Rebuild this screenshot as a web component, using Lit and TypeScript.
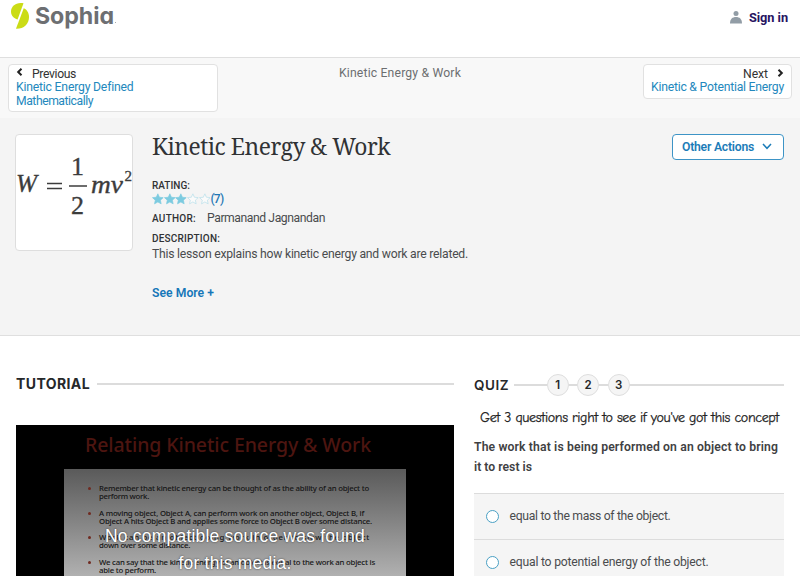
import { LitElement, html, css, svg } from "lit";
import { customElement, property } from "lit/decorators.js";

/** One line of text, tracked so that it fills the given measure. */
@customElement("fitted-text")
class FittedText extends LitElement {
  @property({ type: Number }) width = 0;
  static styles = css`
    :host { display: inline-block; white-space: pre; }
    .line { display: inline-block; }
  `;
  firstUpdated() {
    const line = this.renderRoot.querySelector(".line") as HTMLElement;
    const count = (this.textContent || "").length;
    if (!this.width || !count) return;
    const spacing = (this.width - line.getBoundingClientRect().width) / count;
    line.style.letterSpacing = `${spacing}px`;
  }
  render() {
    return html`<span class="line"><slot></slot></span>`;
  }
}

const fit = (text: string, width: number) =>
  html`<fitted-text .width=${width}>${text}</fitted-text>`;

const STAR = "M6 .7 7.6 4.2 11.5 4.6 8.6 7.2 9.4 11 6 9 2.6 11 3.4 7.2 .5 4.6 4.4 4.2Z";

@customElement("app-root")
class AppRoot extends LitElement {
  static styles = css`
    :host {
      display: block; width: 800px; height: 576px; overflow: hidden; background: #fff;
      font-family: Roboto, "Liberation Sans", sans-serif; font-size: 12.2px; color: #4a4c4e;
    }
    * { box-sizing: border-box; }
    svg { display: block; }
    .header {
      height: 58px; border-bottom: 1px solid #dfdfdf; padding: 2px 12px 0 10px;
      display: flex; justify-content: space-between; align-items: flex-start;
    }
    .brand { display: flex; }
    .name {
      font: 700 23.2px/28px Inter, Lato, sans-serif; font-feature-settings: "cv11";
      color: #6d6f72; margin-left: 5px;
    }
    .dot { width: 1px; height: 1px; background: #aaa; margin: 20px 0 0 1px; }
    .signin { display: flex; align-items: center; margin-top: 7px; height: 17px; gap: 7px; font-size: 12.8px; font-weight: 700; color: #26145f; }
    .nav {
      height: 60px; background: #f8f8f8; padding: 6px 8px 0;
      display: grid; grid-template-columns: 210px 1fr 149px; align-items: start;
    }
    .card { background: #fff; border: 1px solid #e1e1e1; border-radius: 4px; padding: 3px 7px 0; line-height: 13.3px; color: #2388bd; }
    .prev { height: 48px; }
    .next { height: 35px; text-align: right; }
    .dir { display: flex; height: 13.4px; color: #333; }
    .dir svg { margin-top: 0; }
    .prev .dir { gap: 8px; }
    .next .dir { justify-content: flex-end; gap: 8px; }
    .next .dir svg { margin-top: 1px; }
    .here { padding-left: 121px; padding-top: 2px; line-height: 15px; color: #6c6e70; }
    .detail {
      height: 218px; background: #f4f4f4; border-bottom: 1px solid #dfdfdf; padding: 16px 16px 0 15px;
      display: grid; grid-template-columns: 118px 1fr 112px; column-gap: 19px; align-items: start;
    }
    .thumb { height: 117px; border: 1px solid #dedede; border-radius: 4px; background: #fff; overflow: hidden; }
    .formula { font-family: "Liberation Serif", serif; fill: #3c3c3c; stroke: #3c3c3c; stroke-width: 0.35; }
    .slanted { font-style: italic; }
    .title { font: 400 22.8px/28px "Noto Serif", "Droid Serif", "DejaVu Serif Condensed", "DejaVu Serif", serif; color: #303234; margin-top: -1px; }
    .label { font-size: 10px; font-weight: 500; color: #303234; line-height: 14px; }
    .rating { margin-top: 18px; }
    .stars { display: flex; height: 12px; align-items: center; font-weight: 500; color: #1f78b4; font-size: 12px; }
    .stars svg { margin-top: -1px; }
    .author { display: flex; align-items: baseline; margin-top: 5px; height: 16px; line-height: 16px; gap: 11px; }
    .desc { margin-top: 6px; }
    .about { line-height: 16px; margin-top: 0; }
    .more { line-height: 16px; margin-top: 23px; color: #1677b8; font-weight: 600; }
    .actions {
      height: 26px; border: 1px solid #3d94c6; border-radius: 4px; background: #fff; color: #1b7cb8; font-weight: 600;
      display: flex; align-items: center; padding: 0 9px 1px 9px; gap: 8px;
    }
    .main { display: grid; grid-template-columns: 439px 310px; column-gap: 20px; padding: 38px 15px 0; }
    .head { height: 20px; display: flex; align-items: center; color: #26282a; }
    .rule { height: 2px; background: #dcdcdc; flex: 1; }
    .tutorial .head { padding-left: 1px; font: 700 14px/20px Inter, sans-serif; }
    .tutorial .rule { margin-left: 7px; }
    .video { margin: 31px 0 0 1px; width: 438px; height: 152px; background: #000; position: relative; overflow: hidden; }
    .slidetitle { font: 500 19.5px/26px "Noto Sans", sans-serif; color: #4d1510; padding: 7px 0 0 69px; }
    .slide {
      margin: 11px 0 0 48px; width: 342px; height: 110px; padding: 15px 0 0 24px;
      background: linear-gradient(#5a5a5a, #7d7d7d 40%, #b3b3b3);
      font: 500 7.8px/8.2px "Noto Sans", sans-serif; color: #151515;
    }
    .point { display: flex; height: 16.4px; margin-bottom: 8.2px; }
    .bullet { width: 3px; height: 3px; border-radius: 50%; background: #702a20; margin: 3px 8px 0 0; flex: none; }
    .overlay {
      position: absolute; left: 0; top: 98px; width: 438px; text-align: center;
      font: 17.5px/26.5px "Liberation Sans", sans-serif; color: #fff; text-shadow: 0 0 2px #333;
    }
    .quiz .head { font: 600 13.5px/20px Inter, sans-serif; margin-top: 1px; }
    .quiz .head fitted-text { margin-top: -1px; }
    .step {
      width: 22px; height: 22px; border: 1px solid #dedede; border-radius: 50%; background: #f5f5f5;
      display: flex; align-items: center; justify-content: center; font-size: 11.5px; flex: none;
    }
    .gap { width: 8.5px; height: 2px; background: #dcdcdc; }
    .lead { width: 32.6px; height: 2px; background: #dcdcdc; margin-left: 5px; }
    .tagline { font: 500 14px/22px "Comic Neue", "Patrick Hand", cursive; color: #222; margin: 12px 0 0 6px; -webkit-text-stroke: 0.25px #222; }
    .question { font-weight: 600; line-height: 19.5px; margin-top: 9px; color: #3f4143; }
    .option { height: 46px; background: #f5f5f5; border-top: 1px solid #dcdcdc; display: flex; align-items: center; padding: 0 0 1px 12px; gap: 10.500px; }
    .option:first-child { margin-top: 16px; }
    .radio { width: 13px; height: 13px; border: 1px solid #4aa0c4; border-radius: 50%; background: #fff; margin-top: 1px; }
  `;

  render() {
    return html`
      <div class="header">
        <div class="brand">
          <svg width="20" height="28" viewBox="0 0 20 28" fill="#cbdc16">
            <path d="M10.700 1C5 1 1 5 1 9.500 1 13.500 3.500 16.300 7.600 17.400L13.500 1.300C12.600 1.100 11.600 1 10.700 1Z" />
            <path d="M13.700 6.200C17 7.500 19 11 19 15 19 22 14 26.800 6.500 26.800H6L13.700 6.200Z" />
          </svg>
          <div class="name">${fit("Sophia", 79)}</div><i class="dot"></i>
        </div>
        <div class="signin">
          <svg width="12" height="13" viewBox="0 0 12 13" fill="#929da6">
            <circle cx="6" cy="2.600" r="2.500" /><path d="M0 12.500C0 8 2.500 6 6 6s6 2 6 6.500Z" />
          </svg>
          ${fit("Sign in", 39)}
        </div>
      </div>
      <div class="nav">
        <div class="card prev">
          <div class="dir">
            <svg width="8" height="8" viewBox="0 0 8 8" fill="none" stroke="#222" stroke-width="2"><path d="M5.500 .8 2.200 4 5.500 7.200" /></svg>
            ${fit("Previous", 44)}
          </div>
          <div>${fit("Kinetic Energy Defined", 117)}</div>
          <div>${fit("Mathematically", 77)}</div>
        </div>
        <div class="here">${fit("Kinetic Energy & Work", 122)}</div>
        <div class="card next">
          <div class="dir">
            ${fit("Next", 25)}
            <svg width="8" height="8" viewBox="0 0 8 8" fill="none" stroke="#222" stroke-width="2"><path d="M2.500 .8 5.800 4 2.500 7.200" /></svg>
          </div>
          <div>${fit("Kinetic & Potential Energy", 133)}</div>
        </div>
      </div>
      <div class="detail">
        <div class="thumb">
          <svg class="formula" width="116" height="115" viewBox="0 0 116 115">
            <text class="slanted" x="0" y="57" font-size="25" textLength="21" lengthAdjust="spacingAndGlyphs">W</text>
            <path d="M31 48.500H46M31 53.500H46" stroke-width="1.500" />
            <text x="55" y="40" font-size="26">1</text>
            <path d="M53 51H71" stroke-width="1.700" />
            <text x="55" y="79" font-size="26">2</text>
            <text class="slanted" x="75" y="58" font-size="25" textLength="32" lengthAdjust="spacingAndGlyphs">mv</text>
            <text x="108.500" y="46" font-size="15">2</text>
          </svg>
        </div>
        <div>
          <div class="title">${fit("Kinetic Energy & Work", 238)}</div>
          <div class="label rating">${fit("RATING:", 38)}</div>
          <div class="stars">
            ${[1, 1, 1, 0, 0].map(
              (on) => html`<svg width="11.7" height="12" viewBox="0 0 12 12">
                ${svg`<path d=${STAR} fill=${on ? "#7ccbe0" : "#fafafa"} stroke=${on ? "#7ccbe0" : "#b5dfea"} stroke-width=".7" />`}
              </svg>`
            )}
            ${fit("(7)", 13)}
          </div>
          <div class="author"><span class="label">${fit("AUTHOR:", 44)}</span>${fit("Parmanand Jagnandan", 118)}</div>
          <div class="label desc">${fit("DESCRIPTION:", 68)}</div>
          <div class="about">${fit("This lesson explains how kinetic energy and work are related.", 316)}</div>
          <div class="more">${fit("See More +", 62)}</div>
        </div>
        <div class="actions">
          ${fit("Other Actions", 72)}
          <svg width="10" height="7" viewBox="0 0 10 7" fill="none" stroke="#1b7cb8" stroke-width="1.500"><path d="M1 1 5 5.300 9 1" /></svg>
        </div>
      </div>
      <div class="main">
        <div class="tutorial">
          <div class="head">${fit("TUTORIAL", 74)}<i class="rule"></i></div>
          <div class="video">
            <div class="slidetitle">${fit("Relating Kinetic Energy & Work", 286)}</div>
            <div class="slide">
              ${[
                [["Remember that kinetic energy can be thought of as the ability of an object to", 270], ["perform work.", 50]],
                [["A moving object, Object A, can perform work on another object, Object B, if", 265], ["Object A hits Object B and applies some force to Object B over some distance.", 273]],
                [["Work can be an object doing work in order to slow the object", 271], ["down over some distance.", 91]],
                [["We can say that the kinetic energy of an object is equal to the work an object is", 276], ["able to perform.", 57]],
              ].map(
                (lines) => html`<div class="point"><i class="bullet"></i>
                  <div>${lines.map(([text, width]) => html`<div>${fit(text as string, width as number)}</div>`)}</div>
                </div>`
              )}
            </div>
            <div class="overlay">
              <div>${fit("No compatible source was found", 260)}</div>
              <div>${fit("for this media.", 113)}</div>
            </div>
          </div>
        </div>
        <div class="quiz">
          <div class="head">
            ${fit("QUIZ", 35)}<i class="lead"></i>
            <span class="step">1</span><i class="gap"></i><span class="step">2</span><i class="gap"></i><span class="step">3</span>
            <i class="rule"></i>
          </div>
          <div class="tagline">${fit("Get 3 questions right to see if you've got this concept", 299)}</div>
          <div class="question">
            <div>${fit("The work that is being performed on an object to bring", 304)}</div>
            <div>${fit("it to rest is", 58)}</div>
          </div>
          <div>
            <div class="option"><i class="radio"></i>${fit("equal to the mass of the object.", 161)}</div>
            <div class="option"><i class="radio"></i>${fit("equal to potential energy of the object.", 199)}</div>
          </div>
        </div>
      </div>
    `;
  }
}
